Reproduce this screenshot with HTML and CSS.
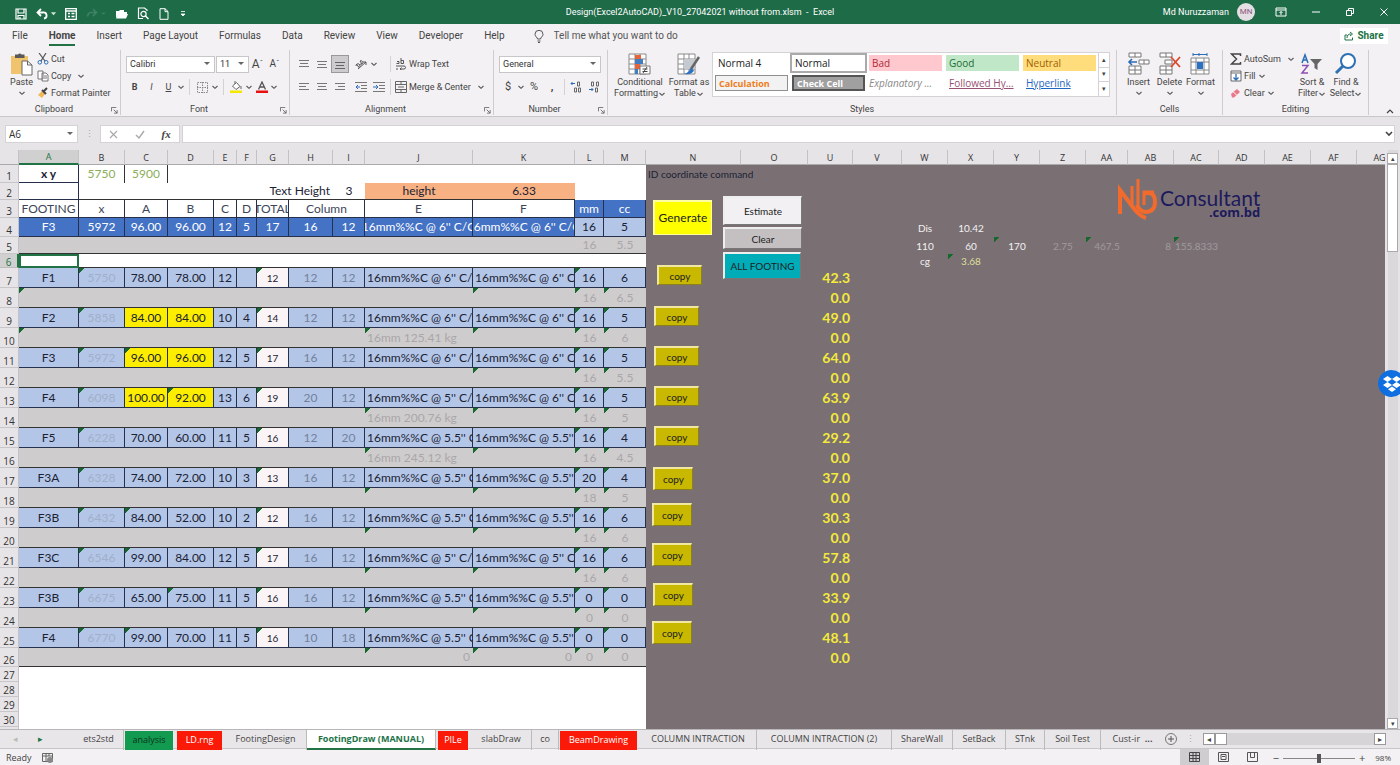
FILE: index.html
```html
<!DOCTYPE html>
<html lang="en">
<head>
<meta charset="utf-8">
<title>Design(Excel2AutoCAD)_V10_27042021 without from.xlsm - Excel</title>
<link rel="stylesheet" href="styles.css">
</head>
<body>
<svg class="defs" aria-hidden="true">
  <symbol id="chev" viewBox="0 0 8 8"><path d="M1.500 3 4 5.300 6.500 3" fill="none" stroke="#555" stroke-width="1.100"/></symbol>
  <symbol id="launch" viewBox="0 0 8 8"><path d="M.5 5V.5H6M3 3l4 4M7 3.500V7H3.500" fill="none" stroke="#666"/></symbol>
  <symbol id="grid" viewBox="0 0 24 24"><path d="M1 2h17v20H1zM1 7h17M1 12h17M1 17h17M7 2v20M12 2v20" fill="#fff" stroke="#8a8a8a"/></symbol>
</svg>

<header class="titlebar">
  <div class="quick">
    <button aria-label="Save"><svg width="12" height="12" viewBox="0 0 12 12"><path d="M1 1h10v10H1zM3 1v4h6V1M3 11V7.500h6V11M5 9v2" fill="none" stroke="#fff" stroke-width="1.200"/></svg></button>
    <button aria-label="Undo"><svg width="12" height="12" viewBox="0 0 12 12"><path d="M2 4.500h5a3 3 0 0 1 1 6M5 1 1.500 4.500 5 8" fill="none" stroke="#fff" stroke-width="1.800"/></svg></button>
    <svg class="tiny" width="7" height="7" viewBox="0 0 8 8"><path d="M1 2.500h6L4 6z" fill="#cfe3d8"/></svg>
    <button aria-label="Form"><svg width="12" height="12" viewBox="0 0 12 12"><path d="M.7.700h10.600v10.600H.7zM.7 3h10.600M3 5.500h2M3 8.500h2M6.500 5.500h3M6.500 8.500h3" fill="none" stroke="#fff" stroke-width="1.300"/></svg></button>
    <button aria-label="Redo" disabled><svg width="12" height="12" viewBox="0 0 12 12"><path d="M10 4.500H5a3 3 0 0 0-3 4M7 1l3.500 3.500L7 8" fill="none" stroke="#3f8364" stroke-width="1.600"/></svg></button>
    <svg class="tiny" width="7" height="7" viewBox="0 0 8 8"><path d="M1 3h6L4 5z" fill="#3f8364"/></svg>
    <button aria-label="Open"><svg width="13" height="12" viewBox="0 0 13 12"><path d="M1 10V3h3l1-1h4v2h3v2H4z" fill="#fff"/><path d="M1 10.500 3.500 6H13l-2 4.500z" fill="#fff"/></svg></button>
    <button aria-label="Print preview"><svg width="12" height="13" viewBox="0 0 12 13"><path d="M10 4V3L7.500 1H1.500v10.500H6" fill="none" stroke="#fff" stroke-width="1.200"/><circle cx="6.500" cy="7" r="2.600" fill="none" stroke="#fff" stroke-width="1.200"/><path d="m8.500 9 3 3" stroke="#fff" stroke-width="1.500"/></svg></button>
    <button aria-label="New"><svg width="12" height="12" viewBox="0 0 12 12"><path d="M2 .7h5L10 3.500v7.800H2zM7 .7v3h3" fill="none" stroke="#fff"/></svg></button>
    <button aria-label="Customize toolbar"><svg width="8" height="8" viewBox="0 0 8 8"><path d="M2 1.500h4M2 4h4L4 6z" fill="#fff" stroke="#fff" stroke-width=".8"/></svg></button>
  </div>
  <h1>Design(Excel2AutoCAD)_V10_27042021 without from.xlsm&nbsp; -&nbsp; Excel</h1>
  <div class="account">
    <span>Md Nuruzzaman</span><span class="avatar">MN</span>
    <button aria-label="Ribbon options"><svg width="12" height="10" viewBox="0 0 12 10"><path d="M1 1h10v8H1zM1 3h10M6 8V4.500M4.500 6 6 4.500 7.500 6" fill="none" stroke="#fff"/></svg></button>
    <button aria-label="Minimize"><svg width="10" height="10" viewBox="0 0 10 10"><path d="M1 5h8" stroke="#fff"/></svg></button>
    <button aria-label="Restore"><svg width="10" height="10" viewBox="0 0 10 10"><path d="M1.500 3.500h5v5h-5zM3.500 3.500v-2h5v5h-2" fill="none" stroke="#fff"/></svg></button>
    <button aria-label="Close"><svg width="10" height="10" viewBox="0 0 10 10"><path d="m1.500 1.500 7 7m0-7-7 7" stroke="#fff"/></svg></button>
  </div>
</header>

<nav class="menu">
  <a href="#">File</a><a href="#" class="on">Home</a><a href="#">Insert</a><a href="#">Page Layout</a><a href="#">Formulas</a><a href="#">Data</a><a href="#">Review</a><a href="#">View</a><a href="#">Developer</a><a href="#">Help</a>
  <label class="tell"><svg width="10" height="13" viewBox="0 0 10 13"><path d="M3.500 9C3.500 7.500 1 6.500 1 4.300a4 4 0 0 1 8 0C9 6.500 6.500 7.500 6.500 9zM3.500 11h3M4 12.500h2" fill="none" stroke="#555"/></svg><input aria-label="Tell me" placeholder="Tell me what you want to do"></label>
  <button class="share"><svg width="10" height="10" viewBox="0 0 10 10"><path d="M3 4H1v5h7.500V6.500M3 7c0-3 1.500-4 4-4M6 1l2.500 2L6 5" fill="none" stroke="#217346"/></svg>Share</button>
</nav>

<div class="ribbon">
  <section class="group clip">
    <div class="body">
      <button class="big"><svg width="23" height="24" viewBox="0 0 23 24"><path d="M1 4h17v18H1z" fill="#f0c36d"/><path d="M5 2.500h3a2 2 0 0 1 3.500 0h3V6H5z" fill="#595959"/><path d="M12 9h5.500L22 13v10H12z" fill="#fff" stroke="#666"/><path d="M17.500 9v4H22" fill="none" stroke="#666"/></svg>Paste<svg class="chev"><use href="#chev"/></svg></button>
      <div class="stack">
        <button><svg width="12" height="12" viewBox="0 0 12 12"><path d="M2 0 8 8M9 0 4 8" stroke="#555" fill="none" stroke-width="1.200"/><circle cx="2.800" cy="9.300" r="1.800" fill="none" stroke="#2b6cb5"/><circle cx="9.200" cy="9.300" r="1.800" fill="none" stroke="#2b6cb5"/></svg>Cut</button>
        <button><svg width="12" height="12" viewBox="0 0 12 12"><path d="M1 1h5v8H1zM5 3h4l2 2v6H5zM7 6h3M7 8h3" fill="#fff" stroke="#777"/></svg>Copy<svg class="chev gapl"><use href="#chev"/></svg></button>
        <button><svg width="12" height="12" viewBox="0 0 12 12"><path d="m1 8 4-4 3 3-3 4z" fill="#f0b955"/><path d="m5 3 4 4M7 4l3-3" stroke="#444" stroke-width="2"/></svg>Format Painter</button>
      </div>
    </div>
    <footer>Clipboard<svg class="launch"><use href="#launch"/></svg></footer>
  </section>

  <section class="group font">
    <div class="body rows">
      <div class="row"><select class="face" aria-label="Font"><option>Calibri</option></select><select class="size" aria-label="Font size"><option>11</option></select>
        <button class="ic grow">A<sup>ˆ</sup></button><button class="ic grow less">A<sup>ˇ</sup></button></div>
      <div class="row"><button class="ic"><b>B</b></button><button class="ic"><i>I</i></button><button class="ic"><u>U</u></button><svg class="chev"><use href="#chev"/></svg><span class="bar"></span>
        <button class="ic" aria-label="Borders"><svg width="11" height="11" viewBox="0 0 11 11"><path d="M.5.500h10v10H.5zM5.500 0v11M0 5.500h11" fill="none" stroke="#888" stroke-dasharray="1.500 1"/></svg></button><svg class="chev"><use href="#chev"/></svg><span class="bar"></span>
        <button class="ic" aria-label="Fill color"><svg width="13" height="12" viewBox="0 0 13 12"><path d="m2.500 5 4-3.500 3.500 4L6 8.500z" fill="#fff" stroke="#666"/><path d="M5 3V0M11 5v3" stroke="#666"/><path d="M0 9.500h12V12H0z" fill="#f5e800"/></svg></button><svg class="chev"><use href="#chev"/></svg>
        <button class="ic" aria-label="Font color"><svg width="12" height="12" viewBox="0 0 12 12"><path d="M2.500 8.500 6 1l3.500 7.500M4 6h4" fill="none" stroke="#555" stroke-width="1.300"/><path d="M0 9.500h12V12H0z" fill="#e81010"/></svg></button><svg class="chev"><use href="#chev"/></svg></div>
    </div>
    <footer>Font<svg class="launch"><use href="#launch"/></svg></footer>
  </section>

  <section class="group align">
    <div class="body rows">
      <div class="row"><button class="ic" aria-label="Top"><svg width="10" height="10"><path d="M0 1.500h10M1 4.500h8M0 7.500h10" stroke="#777"/></svg></button><button class="ic" aria-label="Middle"><svg width="10" height="10"><path d="M0 2.500h10M1 5.500h8M0 8.500h10" stroke="#777"/></svg></button><button class="ic pressed" aria-label="Bottom"><svg width="10" height="10"><path d="M0 3.500h10M1 6.500h8M0 9.500h10" stroke="#666"/></svg></button>
        <button class="ic skip" aria-label="Orientation"><svg width="12" height="12" viewBox="0 0 12 12"><path d="M1 8a2 2 0 1 1 3 1.500L1.500 6M5 6a1.800 1.800 0 1 0 0-3L7 6M3 11l8-7M11 7V4H8" fill="none" stroke="#555"/></svg></button><svg class="chev"><use href="#chev"/></svg><span class="bar push"></span>
        <button class="txt"><svg width="12" height="12" viewBox="0 0 12 12"><path d="M2 3.500h2v2H1.500M6 0v5.500h2.500v-3H6M1 8h8a1.500 1.500 0 0 1 0 3H5M6.500 9.500 5 11l1.500 1M1 11h2" fill="none" stroke="#555"/></svg>Wrap Text</button></div>
      <div class="row"><button class="ic" aria-label="Left"><svg width="10" height="10"><path d="M0 1.500h10M0 4.500h7M0 7.500h10" stroke="#777"/></svg></button><button class="ic" aria-label="Center"><svg width="10" height="10"><path d="M0 1.500h10M1 4.500h8M0 7.500h10" stroke="#777"/></svg></button><button class="ic" aria-label="Right"><svg width="10" height="10"><path d="M0 1.500h10M3 4.500h7M0 7.500h10" stroke="#777"/></svg></button>
        <button class="ic skip" aria-label="Outdent"><svg width="12" height="10"><path d="M0 .5h12M6 3.500h6M6 6.500h6M0 9.500h12" stroke="#777"/><path d="M5 5H1M3 3 1 5l2 2" fill="none" stroke="#2b6cb5"/></svg></button><button class="ic" aria-label="Indent"><svg width="12" height="10"><path d="M0 .5h12M6 3.500h6M6 6.500h6M0 9.500h12" stroke="#777"/><path d="M0 5h4M3 3l2 2-2 2" fill="none" stroke="#2b6cb5"/></svg></button><span class="bar"></span>
        <button class="txt"><svg width="12" height="12" viewBox="0 0 12 12"><path d="M.5.500h11v11H.5zM0 3.500h12M0 8.500h12M6 0v3M6 9v3M3 6h6" fill="none" stroke="#666"/></svg>Merge &amp; Center<svg class="chev gapl"><use href="#chev"/></svg></button></div>
    </div>
    <footer>Alignment<svg class="launch"><use href="#launch"/></svg></footer>
  </section>

  <section class="group number">
    <div class="body rows">
      <div class="row"><select class="fmt" aria-label="Number format"><option>General</option></select></div>
      <div class="row"><button class="ic sym">$</button><svg class="chev"><use href="#chev"/></svg><button class="ic sym">%</button><button class="ic sym"><b>,</b></button><span class="bar push"></span>
        <button class="ic" aria-label="Increase decimal"><svg width="12" height="12" viewBox="0 0 12 12"><path d="M5 2.500H1M2.500 1 1 2.500 2.500 4" fill="none" stroke="#2b6cb5"/><path d="M7.500 1h2v4h-2zM4.500 7h2v4h-2zM8.500 7h2v4h-2z" fill="none" stroke="#666"/></svg></button><button class="ic" aria-label="Decrease decimal"><svg width="12" height="12" viewBox="0 0 12 12"><path d="M1 8.500h4M3.500 7 5 8.500 3.500 10" fill="none" stroke="#2b6cb5"/><path d="M3.500 1h2v4h-2zM8.500 1h2v4h-2zM7.500 7h2v4h-2z" fill="none" stroke="#666"/></svg></button></div>
    </div>
    <footer>Number<svg class="launch"><use href="#launch"/></svg></footer>
  </section>

  <section class="group styles">
    <div class="body">
      <button class="big cond"><svg width="24" height="24" viewBox="0 0 24 24"><use href="#grid"/><path d="M7 3h6v4H7zM7 12h5v5H7z" fill="#e8633a"/><path d="M7 7h8v5H7zM7 17h3v5H7z" fill="#3f7fc1"/><path d="M12 14h10v8H12z" fill="#fff" stroke="#777"/><path d="M14.500 17h5M14.500 19.500h5M19 15l-4 6" stroke="#444"/></svg><span>Conditional<br>Formatting<svg class="chev"><use href="#chev"/></svg></span></button>
      <button class="big ftab"><svg width="24" height="24" viewBox="0 0 24 24"><use href="#grid"/><path d="M7 7h11v10H7z" fill="#c5cad0"/><path d="m22 5-8 12" stroke="#666" stroke-width="2.500"/><path d="M7 22q6-2 6-6l4 2q-1 5-10 4z" fill="#2b72c4"/></svg><span>Format as<br>Table<svg class="chev"><use href="#chev"/></svg></span></button>
      <div class="gallery">
        <div class="swatches">
          <button>Normal 4</button><button class="sel">Normal</button><button class="bad">Bad</button><button class="good">Good</button><button class="neutral">Neutral</button>
          <button class="calc">Calculation</button><button class="check">Check Cell</button><button class="expl">Explanatory ...</button><button class="foll">Followed Hy...</button><button class="hyper">Hyperlink</button>
        </div>
        <div class="spin"><button aria-label="Up">▴</button><button aria-label="Down">▾</button><button aria-label="More">▾</button></div>
      </div>
    </div>
    <footer>Styles</footer>
  </section>

  <section class="group cells">
    <div class="body">
      <button class="big"><svg width="24" height="24" viewBox="0 0 24 24"><path d="M2 1h12v4H2zM8 1v4M2 14h12v8H2zM2 18h12M8 14v8M12 8h10v4H12zM17 8v4" fill="#fff" stroke="#777"/><path d="M10 10H2M5 7l-3 3 3 3" fill="none" stroke="#2b6cb5" stroke-width="1.600"/></svg>Insert<svg class="chev"><use href="#chev"/></svg></button>
      <button class="big"><svg width="24" height="24" viewBox="0 0 24 24"><path d="M2 1h12v4H2zM8 1v4M2 14h12v8H2zM2 18h12M8 14v8M7 8h7v4H7z" fill="#fff" stroke="#777"/><path d="m13 5 9 10M22 5l-9 10" stroke="#d9472b" stroke-width="1.800"/></svg>Delete<svg class="chev"><use href="#chev"/></svg></button>
      <button class="big"><svg width="24" height="24" viewBox="0 0 24 24"><path d="M2 6h18v16H2zM2 10h18M2 18h18M7 6v16M15 6v16" fill="#fff" stroke="#888"/><path d="M8 10h6v7H8z" fill="#2b72c4"/><path d="M4 2.500h14M4 1v3M18 1v3M10 1v3" stroke="#2b6cb5"/></svg>Format<svg class="chev"><use href="#chev"/></svg></button>
    </div>
    <footer>Cells</footer>
  </section>

  <section class="group edit">
    <div class="body">
      <div class="stack">
        <button><svg width="12" height="12" viewBox="0 0 12 12"><path d="M10.500 3V1H1.500l5 5-5 5h9V9" fill="none" stroke="#444" stroke-width="1.500"/></svg>AutoSum<svg class="chev gapl"><use href="#chev"/></svg></button>
        <button><svg width="12" height="12" viewBox="0 0 12 12"><path d="M1 1h10v10H1zM1 3h10" fill="#fff" stroke="#666"/><path d="M6 4v6M3.500 7.500 6 10l2.500-2.500" fill="none" stroke="#2b6cb5" stroke-width="1.300"/></svg>Fill<svg class="chev"><use href="#chev"/></svg></button>
        <button><svg width="12" height="12" viewBox="0 0 12 12"><path d="m1 7 6-5 3 3-6 5.500H2z" fill="#e8788a"/><path d="m3.500 5 3 3" stroke="#fff"/></svg>Clear<svg class="chev"><use href="#chev"/></svg></button>
      </div>
      <button class="big sort"><svg width="24" height="24" viewBox="0 0 24 24"><path d="M2 11 5 3l3 8M3 8h4" fill="none" stroke="#2b6cb5" stroke-width="1.500"/><path d="M2 13.500h6L2 21h6" fill="none" stroke="#8e4fb5" stroke-width="1.500"/><path d="M10 7h12l-4.500 5v6l-3-2v-4z" fill="#666"/></svg><span>Sort &amp;<br>Filter<svg class="chev"><use href="#chev"/></svg></span></button>
      <button class="big"><svg width="24" height="24" viewBox="0 0 24 24"><circle cx="14" cy="9" r="7" fill="#fff" stroke="#2f6fb3" stroke-width="2"/><path d="m9 14-7 7" stroke="#2f6fb3" stroke-width="3"/></svg><span>Find &amp;<br>Select<svg class="chev"><use href="#chev"/></svg></span></button>
    </div>
    <footer>Editing</footer>
  </section>
  <button class="collapse" aria-label="Collapse ribbon"><svg width="8" height="6"><path d="m1 5 3-3 3 3" fill="none" stroke="#444" stroke-width="1.200"/></svg></button>
</div>

<div class="formula">
  <select class="name" aria-label="Name box"><option>A6</option></select>
  <span class="dots">⋮</span>
  <div class="fx">
    <button aria-label="Cancel"><svg width="9" height="9"><path d="m1 1 7 7m0-7-7 7" stroke="#aaa" stroke-width="1.200"/></svg></button>
    <button aria-label="Enter"><svg width="10" height="9"><path d="m1 5 3 3 5-7" fill="none" stroke="#aaa" stroke-width="1.400"/></svg></button>
    <button class="fn"><i>fx</i></button>
  </div>
  <div class="line"><input aria-label="Formula"><svg width="8" height="8"><path d="m1 2 3 3 3-3" fill="none" stroke="#444" stroke-width="1.600"/></svg></div>
</div>

<main class="work">
  <div class="sheet">
    <table id="grid-table"></table>
    <button class="shape gen">Generate</button>
    <button class="shape est">Estimate</button>
    <button class="shape clr">Clear</button>
    <button class="shape all">ALL FOOTING</button>
    <div class="logo">
      <svg width="41" height="42" viewBox="0 0 41 42"><g fill="none" stroke="#f26a2c" stroke-width="4"><path d="M3 36V12l15 20q5 6 11 8"/><path d="M15 27V8M21 30V1" stroke-width="3"/><path d="M26 16q12-4 12 8 0 10-10 10-6-1-8-7"/><path d="M27 27V14h10" stroke-width="3"/></g></svg>
      <div><span>Consultant</span><b>.com.bd</b></div>
    </div>
  </div>
  <div class="vscroll"><button aria-label="Scroll up">▴</button><span class="thumb"></span><button class="down" aria-label="Scroll down">▾</button></div>
  <button class="dropbox" aria-label="Dropbox"><svg width="20" height="18" viewBox="0 0 20 18"><path d="m5.500 1 4.500 3-4.500 3L1 4zM14.500 1 19 4l-4.500 3L10 4zM5.500 7l4.500 3-4.500 3L1 10zM14.500 7l4.500 3-4.500 3L10 10zM10 11.500l4 2.700-4 2.700-4-2.700z" fill="#fff"/></svg></button>
</main>

<div class="tabs">
  <div class="nav"><span class="off">◂</span><span>▸</span></div>
  <nav>
    <a href="#">ets2std</a><a href="#" class="green">analysis</a><a href="#" class="red">LD.rng</a><a href="#">FootingDesign</a><a href="#" class="active">FootingDraw (MANUAL)</a><a href="#" class="red">PILe</a><a href="#">slabDraw</a><a href="#">co</a><a href="#" class="red">BeamDrawing</a><a href="#">COLUMN INTRACTION</a><a href="#">COLUMN INTRACTION (2)</a><a href="#">ShareWall</a><a href="#">SetBack</a><a href="#">STnk</a><a href="#">Soil Test</a><a href="#" class="last">Cust-ir&nbsp; <b>...</b></a>
  </nav>
  <button class="plus" aria-label="New sheet"><svg width="12" height="12"><circle cx="6" cy="6" r="5.500" fill="none" stroke="#777"/><path d="M3 6h6M6 3v6" stroke="#555"/></svg></button>
  <span class="dots">⋮</span>
  <div class="hscroll"><button aria-label="Scroll left">◂</button><span class="thumb"></span><button class="end" aria-label="Scroll right">▸</button></div>
</div>

<footer class="status">
  <span>Ready</span>
  <svg width="12" height="11"><path d="M.5.500h10v8H.5zM0 3h11M4 0v9M7 0v3" fill="none" stroke="#666"/><circle cx="8" cy="7" r="3" fill="#888"/></svg>
  <div class="views">
    <button class="on" aria-label="Normal view"><svg width="11" height="10"><path d="M.5.500h10v9H.5zM0 3.500h11M0 6.500h11M4 0v10M7 0v10" fill="none" stroke="#444"/></svg></button>
    <button aria-label="Page layout view"><svg width="11" height="10"><path d="M.5.500h10v9H.5zM3 2.500h5v5H3zM4 4.500h3" fill="none" stroke="#555"/></svg></button>
    <button aria-label="Page break view"><svg width="11" height="10"><path d="M.5.500h10v9H.5zM3.500 0v5.500h4V0" fill="none" stroke="#555"/></svg></button>
  </div>
  <div class="zoom"><span>−</span><input type="range" min="0" max="100" value="50" aria-label="Zoom"><span>+</span><span class="pct">98%</span></div>
</footer>
<script src="sheet.js"></script>
</body>
</html>
```

FILE: styles.css
```css
* { box-sizing: border-box; }
body { margin: 0; height: 100vh; display: flex; flex-direction: column; overflow: hidden; background: #f3f1f3; color: #444; font: 9px/12px "Open Sans", "Noto Sans", sans-serif; }
button, input, select { font: inherit; color: inherit; border: 0; background: none; padding: 0; margin: 0; border-radius: 0; }
button { display: inline-flex; align-items: center; justify-content: center; white-space: nowrap; }
a { color: inherit; text-decoration: none; white-space: nowrap; }
svg { flex: none; }
.defs { display: none; }

.titlebar { flex: none; height: 24px; background: #1e6b48; color: #fff; display: grid; grid-template-columns: 1fr auto 1fr; align-items: center; }
.titlebar, .menu, .ribbon { font-family: Roboto, sans-serif; }
.titlebar h1 { margin: 0; font-size: 9px; font-weight: 400; }
.quick { display: flex; align-items: center; gap: 9px; padding: 3px 0 0 15px; }
.quick .tiny { margin: 0 -1px 0 -7px; }
.account { display: flex; align-items: center; justify-content: flex-end; gap: 24px; padding-right: 11px; }
.avatar { width: 18px; height: 18px; border-radius: 50%; background: #e4dfe3; color: #8b5a80; text-align: center; line-height: 18px; font-size: 8px; margin-left: -16px; margin-right: -4px; }

.menu { flex: none; height: 24px; display: flex; align-items: center; gap: 21px; padding: 0 12px; font-size: 10px; }
.menu a { line-height: 16px; height: 20px; padding-top: 2px; border-bottom: 2px solid transparent; }
.menu a.on { font-weight: 700; border-color: #217346; }
.tell { display: flex; align-items: center; gap: 10px; margin-left: 8px; flex: 1; }
.tell input { width: 200px; outline: 0; }
.tell input::placeholder { color: #555; opacity: 1; }
.share { background: #fff; color: #217346; font-weight: 700; gap: 3px; height: 16px; width: 48px; }

.ribbon { flex: none; height: 69px; display: flex; border-bottom: 1px solid #c9c7c9; position: relative; padding-right: 31px; }
.group { display: flex; flex-direction: column; border-right: 1px solid #cfcdcf; margin: 2px 0 1px; flex: none; }
.group footer { position: relative; text-align: center; height: 11px; line-height: 11px; padding-right: 12px; }
.launch { position: absolute; right: 2px; top: 3px; width: 7px; height: 7px; }
.body { flex: 1; display: flex; }
.chev { width: 8px; height: 8px; vertical-align: middle; }
.gapl { margin-left: 4px; }
.big { flex-direction: column; justify-content: flex-start; line-height: 11px; gap: 1px; padding-top: 2px; }
.stack { display: flex; flex-direction: column; align-items: flex-start; }
.stack button { height: 17px; gap: 2px; }
.rows { flex-direction: column; gap: 5px; padding: 5px 0 0 5px; }
.row { display: flex; align-items: center; height: 18px; }
.ic { width: 18px; height: 18px; }
.txt { gap: 2px; margin-left: 2px; }
.skip { margin-left: 3px; }
.bar { width: 1px; height: 16px; background: #d4d2d4; margin: 0 2px; }
select { appearance: none; height: 17px; border: 1px solid #c8c6c8; color: #333; padding: 0 3px; background: #fff url("data:image/svg+xml,%3Csvg xmlns='http://www.w3.org/2000/svg' width='6' height='4'%3E%3Cpath d='M0 0h6L3 3z' fill='%23666'/%3E%3C/svg%3E") no-repeat right 4px center; }

.clip { width: 121px; }
.clip .big { width: 27px; margin: 0 2px 0 8px; }
.font { width: 169px; }
.face { width: 89px; }
.size { width: 33px; margin-left: 1px; }
.grow { font-size: 12px; }
.grow sup { font-size: 8px; }
.less { font-size: 10px; }
.font .ic { width: 17px; }
.font .bar { margin: 0 4px; }
.align { width: 204px; }
.align .ic + .chev { margin-right: 10px; }
.pressed { background: #cdcbcd; border: 1px solid #999; }
.number { width: 114px; }
.fmt { width: 102px; }
.sym { font-size: 11px; }
.number .push { margin-left: 3px; }
.styles { flex: 1; }
.cond { width: 56px; margin-left: 4px; }
.ftab { width: 42px; margin-right: 2px; }
.gallery { flex: 1; display: flex; margin: 2px 6px 7px 0; border: 1px solid #d4d2d4; background: #fff; }
.swatches { flex: 1; display: grid; grid-template: 20px 20px / repeat(5, minmax(0, 1fr)); align-items: center; }
.swatches button { justify-content: flex-start; height: 16px; margin: 0 2px; padding-left: 3px; font: 10px "Open Sans", sans-serif; color: #222; overflow: hidden; }
.swatches .sel { height: 20px; margin: 0; border: 2px solid #aaa; }
.swatches .bad { background: #ffc7ce; color: #b02a37; }
.swatches .good { background: #c0e8c8; color: #1c6b30; }
.swatches .neutral { background: #ffdc7c; color: #9c5f00; }
.swatches .calc { background: #f2f2f2; border: 1px solid #8f8f8f; color: #ee7d20; font-weight: 700; font-size: 9px; }
.swatches .check { background: #a0a0a0; border: 2px solid #555; color: #fff; font-weight: 700; font-size: 9px; }
.swatches .expl { font-style: italic; color: #888; padding: 0; }
.swatches .foll { text-decoration: underline; color: #985074; }
.swatches .hyper { text-decoration: underline; color: #1f66c0; }
.spin { width: 11px; display: grid; border-left: 1px solid #d4d2d4; font-size: 7px; line-height: 8px; }
.spin button + button { border-top: 1px solid #d4d2d4; }
.styles footer { padding-right: 0; }
.cells { width: 106px; }
.cells .body { padding-left: 6px; }
.cells .big { width: 31px; }
.cells footer, .edit footer { padding: 0; }
.edit { width: 146px; }
.edit .stack { width: 72px; padding-left: 7px; }
.edit .big { width: 34px; }
.collapse { position: absolute; right: 6px; bottom: 2px; }

.formula { flex: none; height: 33px; background: #e6e4e6; display: flex; align-items: center; padding: 1px 5px 0; }
.name { width: 73px; height: 18px; font-size: 10px; border-color: #d4d2d4; }
.dots { width: 22px; text-align: center; color: #aaa; }
.fx { display: flex; width: 80px; height: 18px; background: #fff; border: 1px solid #d4d2d4; justify-content: space-around; }
.fn { font: 700 11px "Liberation Serif", serif; }
.line { flex: 1; display: flex; align-items: center; height: 18px; background: #fff; border: 1px solid #d4d2d4; margin-left: 2px; padding-right: 1px; }
.line input { flex: 1; height: 16px; outline: 0; }

.work { flex: 1; min-height: 0; display: flex; position: relative; background: #e6e4e6; }
.sheet { flex: 1; min-width: 0; overflow: hidden; position: relative; background: #7a7074; font-family: Lato, sans-serif; color: #1a2233; }
table { table-layout: fixed; border-collapse: separate; border-spacing: 0; }
th { font: 9px/12px "Open Sans", sans-serif; background: #e6e4e6; color: #333; padding: 0; border-right: 1px solid #c4c2c4; border-bottom: 1px solid #aaa; overflow: hidden; }
thead th { height: 15px; padding-top: 1px; }
tbody th { border-bottom-color: #c8c6c8; vertical-align: bottom; font-size: 10px; line-height: 11px; }
th.cur { background: #d0d0d0; color: #217346; border-bottom: 2px solid #217346; }
tbody th.cur { border-bottom: 1px solid #bbb; border-right: 2px solid #217346; line-height: 10px; }
td { padding: 0; height: inherit; background: #fff; font-size: 12px; line-height: 14px; white-space: nowrap; overflow: hidden; }
td div { display: flex; justify-content: center; overflow: hidden; height: 14px; }
td.bx { border-right: 1px solid #26304a; border-bottom: 1px solid #26304a; }
td.bb { border-bottom: 1px solid #333; }
td.br { border-right: 1px solid #333; }
td.l div { justify-content: flex-start; padding-left: 2px; }
td.r div { justify-content: flex-end; padding-right: 3px; }
td.strong { font-weight: 700; }
td.blue { background-color: #b4c6e7; }
td.head { background-color: #4472c4; color: #fff; }
td.gray { background-color: #cfcccd; color: #aaa7a9; }
td.yel { background-color: #fdee00; }
td.tot { background-color: #faf4f6; font-size: 10px; }
td.sub { color: #71819c; }
td.ghost { color: #9fafc9; }
td.lime { color: #8aae5a; }
td.orange { background-color: #f8b183; }
td.ttl { color: #3c465a; }
td.dark { background-color: #7a7074; overflow: visible; font-size: 10px; }
td.dark div { overflow: visible; }
td.white { color: #f4f0f2; }
td.pale { color: #dede9a; }
td.dim { color: #a09a9d; }
td.val { font-size: 14px; font-weight: 700; color: #f4ea3a; }
td.tri { background-image: linear-gradient(135deg, #15692c 4px, transparent 4px); background-repeat: no-repeat; }
td.picked { border: 2px solid #217346; }

.shape { position: absolute; color: #222; font-size: 10px; border: 1px solid #777; border-top: 2px solid #eee; border-left: 2px solid #eee; }
.gen { left: 653px; top: 50px; width: 59px; height: 35px; background: #ffff00; border-color: #ffffa0; font-size: 12px; }
.est { left: 723px; top: 46px; width: 79px; height: 29px; background: #f3f0f4; }
.clr { left: 723px; top: 77px; width: 79px; height: 22px; background: #c4c0c2; }
.all { left: 723px; top: 102px; width: 78px; height: 27px; background: #00acb8; }
.copy { width: 45px; height: 20px; background: #c8b800; border-color: #f0e8a0 #8a8020 #8a8020 #f0e8a0; }
.copy.tall { width: 40px; height: 23px; }
.logo { position: absolute; left: 1117px; top: 28px; display: flex; gap: 2px; color: #1d1a5c; }
.logo div { display: flex; flex-direction: column; align-items: flex-end; padding-top: 9px; }
.logo span { font-size: 21px; line-height: 21px; }
.logo b { font: 700 13px/12px "Open Sans", sans-serif; margin-top: -2px; }

.vscroll { width: 15px; display: flex; flex-direction: column; align-items: center; padding-top: 3px; background: linear-gradient(90deg, #e6e4e6 3px, #dad8da 3px 13px, #e6e4e6 13px); }
.vscroll button { width: 11px; height: 11px; background: #fff; border: 1px solid #aaa; font-size: 7px; }
.vscroll .thumb { width: 11px; height: 88px; background: #fff; border: 1px solid #aaa; }
.vscroll .down { margin-top: auto; }
.dropbox { position: absolute; right: -5px; top: 220px; width: 27px; height: 27px; border-radius: 50%; background: #0f6fe0; }

.tabs { flex: none; height: 20px; background: #e8e6e8; display: flex; align-items: center; border-top: 1px solid #b8b6b8; border-bottom: 1px solid #c8c6c8; }
.nav { width: 74px; display: flex; gap: 20px; padding-left: 13px; color: #217346; }
.nav .off { color: #bbb; }
.tabs nav { display: grid; grid-template-columns: 50px 52px 49px 82px 130px 34px 61px 27px 81px 117px 135px 61px 53px 39px 56px 63px; height: 18px; }
.tabs a { display: block; text-align: center; line-height: 18px; border-right: 1px solid #bbb; }
.tabs .green, .tabs .red { border: 0; margin: 1px 3px 0 1px; line-height: 17px; }
.tabs .green { background: #119a50; color: #0b3319; }
.tabs .red { background: #fb1a08; color: #fff; }
.tabs .active { background: #fff; color: #217346; font-weight: 700; border-bottom: 2px solid #217346; margin-right: 1px; }
.tabs .last { border: 0; }
.plus { margin-left: 1px; }
.tabs .dots { width: 26px; }
.hscroll { flex: 1; display: flex; background: #d6d4d6; margin-right: 14px; height: 12px; }
.hscroll button, .hscroll .thumb { width: 12px; background: #fff; border: 1px solid #999; font-size: 8px; }
.hscroll .end { margin-left: auto; }

.status { flex: none; height: 16px; display: flex; align-items: center; gap: 14px; padding: 2px 9px 0 6px; }
.status > svg { margin-left: -4px; }
.views { margin-left: auto; display: flex; margin-top: -2px; }
.views button { width: 29px; height: 16px; }
.views .on { background: #cfcdcf; }
.views { margin-right: -8px; }
.zoom { display: flex; align-items: center; gap: 4px; }
.zoom span { font-size: 11px; }
.zoom .pct { font-size: 8px; margin-left: 6px; }
.zoom input { appearance: none; width: 72px; height: 1px; background: #888; }
.zoom input::-webkit-slider-thumb { appearance: none; width: 4px; height: 9px; background: #555; }
```

FILE: sheet.js
```js
const columns = [["A",60],["B",46],["C",43],["D",46],["E",23],["F",20],["G",32],["H",44],["I",32],["J",108],["K",102],["L",29],["M",42],["N",95],["O",67],["U",45],["V",49],["W",46],["X",46],["Y",46],["Z",46],["AA",42],["AB",46],["AC",45],["AD",46],["AE",46],["AF",46],["AG",46]];
const names = columns.map(c => c[0]);
const left = names.slice(0, 13);
const heights = { 1: 18, 2: 17, 3: 18, 4: 19, 5: 17, 6: 12, 26: 19 };
const heightOf = r => heights[r] || (r > 26 ? 15 : 20);
const cells = {};
const set = (ref, text, cls) => { cells[ref] = { text, cls }; };
const fill = (row, cls, cols = left) => cols.forEach(c => set(c + row, "", cls));

set("A1", "x y", "bx strong"); set("B1", "5750", "lime br"); set("C1", "5900", "lime br");
set("A2", "", "bx");
fill(2, "bb", ["B","C","D","E","F"]);
set("G2", "Text Height", "bb r"); cells.G2.span = 2; cells.H2 = { skip: true };
set("I2", "3", "bb");
set("J2", "height", "orange bb"); set("K2", "6.33", "orange bb");
["FOOTING","x","A","B","C","D","TOTAL"].forEach((t, i) => set(left[i] + 3, t, "bx ttl"));
set("H3", "Column", "bx ttl"); cells.H3.span = 2; cells.I3 = { skip: true };
set("J3", "E", "bx ttl"); set("K3", "F", "bx ttl"); set("L3", "mm", "bx head"); set("M3", "cc", "bx head");

const bar = (size, tail) => "16mm%%C @ " + size + "''" + tail;
const tails = { J: size => size === "5.5" ? " C" : " C/", K: size => size === "5.5" ? "" : " C" };
["F3","5972","96.00","96.00","12","5","17","16","12",bar(6, " C/C"),bar(6, " C/C")].forEach((t, i) => set(left[i] + 4, t, "bx head"));
set("L4", "16", "bx blue"); set("M4", "5", "bx blue");
fill(5, "gray bb"); set("L5", "16", "gray bb"); set("M5", "5.5", "gray bb");
fill(6, "bb"); set("A6", "", "picked");

const footings = [
  ["F1","5750","78.00","78.00","12","","12","12","12","6","6","16","6","","","16","6.5"],
  ["F2","5858","84.00","84.00","10","4","14","12","12","6","6","16","5","16mm 125.41 kg","","16","6"],
  ["F3","5972","96.00","96.00","12","5","17","16","12","6","6","16","5","","","16","5.5"],
  ["F4","6098","100.00","92.00","13","6","19","20","12","5","6","16","5","16mm 200.76 kg","","16","5"],
  ["F5","6228","70.00","60.00","11","5","16","12","20","5.5","5.5","16","4","16mm 245.12 kg","","16","4.5"],
  ["F3A","6328","74.00","72.00","10","3","13","16","12","5.5","5.5","20","4","","","18","5"],
  ["F3B","6432","84.00","52.00","10","2","12","16","12","5.5","5.5","16","6","","","16","6"],
  ["F3C","6546","99.00","84.00","12","5","17","16","12","5","5","16","6","","","16","6"],
  ["F3B","6675","65.00","75.00","11","5","16","16","12","5.5","5.5","0","0","","","0","0"],
  ["F4","6770","99.00","70.00","11","5","16","10","18","5.5","5.5","0","0","0","0","0","0"]
];
const styleOf = { B: "blue ghost", G: "tot", H: "blue sub", I: "blue sub", J: "blue l", K: "blue l" };
const marks = { 7: "BGL", 8: "AKLM", 9: "BGLM", 10: "AJKLM", 11: "BCGLM", 12: "KLM", 13: "BDGLM", 15: "BGLM", 17: "BGLM", 19: "BCGLM", 21: "BCGLM", 23: "BDGLM", 25: "BCGLM" };
footings.forEach((f, n) => {
  const row = 7 + n * 2;
  left.forEach((c, i) => {
    let cls = styleOf[c] || "blue";
    if ((c === "C" || c === "D") && n > 0 && n < 4) cls = "yel";
    set(c + row, tails[c] ? bar(f[i], tails[c](f[i])) : f[i], "bx " + cls);
    set(c + (row + 1), "", "gray bb");
  });
  ["J","K","L","M"].forEach((c, i) => set(c + (row + 1), f[13 + i], "gray bb" + (i < 2 ? (n === 9 ? " r" : " l") : "")));
});
for (let r = 7; r <= 26; r++) for (const c of marks[r] || "JKLM") cells[c + r].cls += " tri";

["42.3","49.0","64.0","63.9","29.2","37.0","30.3","57.8","33.9","48.1"].forEach((v, n) => {
  set("U" + (7 + n * 2), v, "val r");
  set("U" + (8 + n * 2), "0.0", "val r");
});
set("N1", "ID coordinate command", "l");
set("W4", "Dis", "white"); set("X4", "10.42", "white");
set("W5", "110", "white"); set("X5", "60", "white"); set("Y5", "170", "white tri"); set("Z5", "2.75", "dim");
set("AA5", "467.5", "dim tri"); set("AB5", "8", "dim r"); set("AC5", "155.8333", "dim tri");
set("W6", "cg", "white"); set("X6", "3.68", "pale tri");

const table = document.getElementById("grid-table");
table.style.width = columns.reduce((s, c) => s + c[1], 19) + "px";
let html = '<colgroup><col style="width:19px">' + columns.map(c => `<col style="width:${c[1]}px">`).join("") + "</colgroup>";
html += "<thead><tr><th></th>" + names.map(n => `<th${n === "A" ? ' class="cur"' : ""}>${n}</th>`).join("") + "</tr></thead><tbody>";
for (let r = 1; r <= 31; r++) {
  html += `<tr style="height:${heightOf(r)}px"><th${r === 6 ? ' class="cur"' : ""}>${r}</th>`;
  names.forEach((c, i) => {
    const cell = cells[c + r] || { text: "", cls: "" };
    if (cell.skip) return;
    const cls = (cell.cls + (i > 12 ? " dark" : "")).trim();
    html += `<td${cls ? ` class="${cls}"` : ""}${cell.span ? ` colspan="${cell.span}"` : ""}>${cell.text ? `<div>${cell.text}</div>` : ""}</td>`;
  });
  html += "</tr>";
}
table.innerHTML = html + "</tbody>";

[[657,115],[654,156],[654,196],[654,236],[654,276],[653,317],[652,353],[652,393],[653,433],[652,471]].forEach(([x, y], n) => {
  const b = document.createElement("button");
  b.className = "shape copy" + (n > 4 ? " tall" : "");
  b.style.left = x + "px";
  b.style.top = y + "px";
  b.textContent = "copy";
  table.parentNode.append(b);
});
```
